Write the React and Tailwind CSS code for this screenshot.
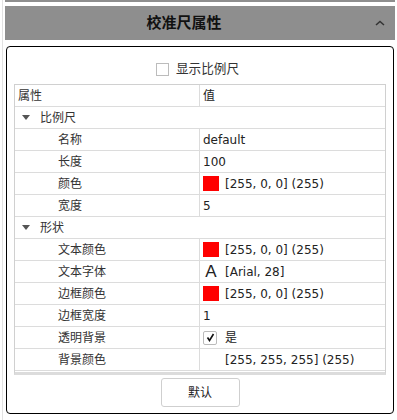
import React from 'react'

const font = { fontFamily: '"DejaVu Sans", "Noto Sans CJK SC", sans-serif' }

const Swatch = () => <span className="inline-block w-[16px] h-[15px] bg-[#ff0000] mr-[6px]" />

const rows = [
  { type: 'head', label: '属性', value: '值' },
  { type: 'cat', label: '比例尺' },
  { label: '名称', value: 'default' },
  { label: '长度', value: '100' },
  { label: '颜色', value: '[255, 0, 0] (255)', swatch: true },
  { label: '宽度', value: '5' },
  { type: 'cat', label: '形状' },
  { label: '文本颜色', value: '[255, 0, 0] (255)', swatch: true },
  { label: '文本字体', value: '[Arial, 28]', fontIcon: true },
  { label: '边框颜色', value: '[255, 0, 0] (255)', swatch: true },
  { label: '边框宽度', value: '1' },
  { label: '透明背景', value: '是', check: true },
  { label: '背景颜色', value: '[255, 255, 255] (255)', blank: true },
]

const Row = ({ row }) => {
  if (row.type === 'cat') {
    return (
      <div className="h-[22px] flex items-center border-b border-[#dcdcdc] text-[12px] text-[#333]">
        <svg width="8" height="5" viewBox="0 0 8 5" className="ml-[7px] mr-[10px]">
          <path d="M0 0 L8 0 L4 5 Z" fill="#555" />
        </svg>
        {row.label}
      </div>
    )
  }
  const head = row.type === 'head'
  return (
    <div className="h-[22px] flex border-b border-[#dcdcdc] text-[12px]">
      <div
        className={`w-[185px] flex items-center border-r border-[#dcdcdc] text-[#333] ${
          head ? 'pl-[3px]' : 'pl-[43px]'
        }`}
      >
        {row.label}
      </div>
      <div className="flex-1 flex items-center pl-[3px] text-[#222]">
        {row.swatch && <Swatch />}
        {row.fontIcon && (
          <span className="w-[16px] mr-[6px] text-[17px] text-center leading-none text-[#222]" style={{ fontFamily: '"Liberation Sans", sans-serif' }}>
            A
          </span>
        )}
        {row.check && (
          <span className="w-[14px] h-[14px] mr-[8px] border border-[#bbb] rounded-[2px] flex items-center justify-center">
            <svg width="9" height="9" viewBox="0 0 9 9">
              <path d="M1.5 4.5 L3.5 7.5 L7.5 1" stroke="#111" strokeWidth="1.6" fill="none" />
            </svg>
          </span>
        )}
        {row.blank && <span className="w-[16px] mr-[6px]" />}
        {row.value}
      </div>
    </div>
  )
}

export default function App() {
  return (
    <div className="w-[397px] h-[420px] bg-white flex pl-[2px] overflow-hidden" style={font}>
      <div className="border-l border-[#e2e2e2] pl-[2px] flex-1 flex flex-col pr-[2px]">
        <div className="h-[2px] bg-[#8e8e8e]" />
        <div className="mt-[4px] h-[34px] bg-[#8e8e8e] flex items-center">
          <span className="flex-1 text-center text-[15px] font-bold text-[#111] pr-[12px]">校准尺属性</span>
          <svg width="10" height="6" viewBox="0 0 10 6" className="mr-[10px]">
            <path d="M1 5 L5 1.5 L9 5" stroke="#333" strokeWidth="1.5" fill="none" />
          </svg>
        </div>
        <div className="mt-[6px] mx-[1px] h-[368px] border-[1.5px] border-black rounded-[4px] flex flex-col">
          <div className="h-[37px] flex items-center justify-center pt-[8px] pr-[5px]">
            <span className="w-[13px] h-[13px] border border-[#bcbcbc] mr-[7px]" />
            <span className="text-[12.6px] text-[#333]">显示比例尺</span>
          </div>
          <div className="mx-[7px] h-[291px] border border-[#d0d0d0] border-b-[3px] border-b-[#dcdcdc]">
            {rows.map((r, i) => (
              <Row key={i} row={r} />
            ))}
          </div>
          <div className="flex justify-center mt-[3px]">
            <button className="w-[79px] h-[29px] border border-[#cfcfcf] rounded-[3px] bg-white text-[12px] text-[#222]">
              默认
            </button>
          </div>
        </div>
      </div>
    </div>
  )
}
